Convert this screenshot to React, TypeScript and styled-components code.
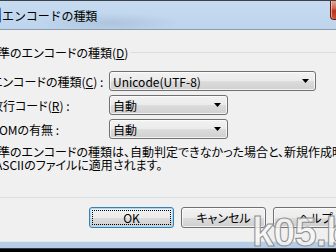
import React from "react";
import styled, { createGlobalStyle } from "styled-components";

const GlobalStyle = createGlobalStyle`
  html, body { margin: 0; padding: 0; }
  body { width: 336px; height: 252px; overflow: hidden; background: #000; }
  #root { width: 336px; height: 252px; overflow: hidden; position: relative; }
`;

const UI_FONT = `"Noto Sans CJK JP", "Noto Sans", sans-serif`;

const Window = styled.div`
  box-sizing: border-box;
  width: 440px;
  height: 249px;
  margin-left: -40px;
  display: flex;
  flex-direction: column;
  background: linear-gradient(to bottom, #c2d7ee 0%, #c8dbf0 55%, #b6cce6 100%);
  border-top: 1px solid #3e4247;
  border-bottom: 1px solid #2b3a4c;
  font-family: ${UI_FONT};
  font-size: 12px;
  color: #000;
`;

const TitleBar = styled.div`
  height: 28px;
  display: flex;
  align-items: center;
  padding: 0 27px 0 25px;
  background:
    radial-gradient(ellipse 70px 10px at 150px 22px, rgba(150, 175, 200, 0.45), rgba(150, 175, 200, 0) 100%),
    linear-gradient(to bottom, #c6dbf1 0%, #c1d7ee 60%, #bed4ec 100%);
`;

const TitleIcon = styled.div`
  width: 16px;
  height: 16px;
  margin-right: 1px;
  border-radius: 2px;
  background: linear-gradient(135deg, #6aa8e6, #1f5fb5);
`;

const TitleText = styled.span`
  font-size: 12px;
  letter-spacing: -0.1px;
  color: #000;
  white-space: nowrap;
`;

const CloseButton = styled.div`
  align-self: flex-start;
  margin-left: auto;
  width: 43px;
  height: 19px;
  box-sizing: border-box;
  border: 1px solid #5a1d14;
  border-top: none;
  border-radius: 0 0 4px 4px;
  background: linear-gradient(to bottom, #e6a493 0%, #cf6a56 40%, #b8321e 55%, #c9543c 100%);
  box-shadow: inset 1px 0 0 rgba(255, 220, 210, 0.6);
`;

const Client = styled.div`
  box-sizing: border-box;
  height: 213px;
  margin: 0 8px;
  padding: 16px 11px 0 7px;
  background: #f0f0f0;
  border: 1px solid #8c9bad;
  border-bottom-color: #dfe7f0;
  display: flex;
  flex-direction: column;
`;

const GroupBox = styled.fieldset`
  margin: 0;
  padding: 12px 9px 26px 9px;
  border: 1px solid #d5dfe5;
  border-radius: 3px;
  min-width: 0;
`;

const GroupLegend = styled.legend`
  padding: 0 2px;
  margin-left: -2px;
  line-height: 13px;
  font-feature-settings: "palt";
  white-space: nowrap;
`;

const FieldGrid = styled.div`
  margin-left: 5px;
  display: grid;
  grid-template-columns: 118px auto;
  row-gap: 4px;
  align-items: center;
`;

const FieldLabel = styled.span`
  line-height: 13px;
  font-feature-settings: "palt";
  white-space: nowrap;
`;

const Combo = styled.div<{ $w: number }>`
  box-sizing: border-box;
  width: ${(p) => p.$w}px;
  height: 20px;
  display: flex;
  align-items: center;
  justify-content: space-between;
  padding: 0 6px 0 3px;
  border: 1px solid #707070;
  border-radius: 3px;
  background: linear-gradient(to bottom, #f2f2f2 0%, #ebebeb 50%, #dddddd 50%, #cfcfcf 100%);
  box-shadow: inset 0 0 0 1px rgba(255, 255, 255, 0.7);
  white-space: nowrap;
  line-height: 13px;
`;

const Description = styled.p`
  margin: 7px 0 0 0;
  line-height: 12px;
  font-feature-settings: "palt";
  white-space: nowrap;
`;

const LeadChar = styled.span`
  display: inline-block;
  width: 9px;
  overflow: hidden;
`;

const ButtonRow = styled.div`
  margin-top: 9px;
  display: flex;
  justify-content: flex-end;
  gap: 7px;
  padding-right: 22px;
`;

const Button = styled.div<{ $default?: boolean }>`
  position: relative;
  box-sizing: border-box;
  width: 85px;
  height: 21px;
  display: flex;
  align-items: center;
  justify-content: center;
  border: 1px solid ${(p) => (p.$default ? "#3c7fb1" : "#707070")};
  border-radius: 3px;
  background: linear-gradient(to bottom, #f2f2f2 0%, #ebebeb 50%, #dddddd 50%, #cfcfcf 100%);
  box-shadow: inset 0 0 0 1px ${(p) => (p.$default ? "#a6dcf6" : "rgba(255,255,255,0.7)")};
  line-height: 13px;
  font-feature-settings: "palt";
  white-space: nowrap;

  ${(p) =>
    p.$default
      ? `&::after {
    content: "";
    position: absolute;
    inset: 2px;
    border: 1px dotted #000;
  }`
      : ""}
`;

const Watermark = styled.div`
  position: absolute;
  left: 252px;
  top: 212px;
  font-family: "Liberation Sans", Arial, sans-serif;
  font-weight: bold;
  font-size: 40px;
  line-height: 40px;
  letter-spacing: -1px;
  color: rgba(248, 248, 248, 0.75);
  -webkit-text-stroke: 1px #8e8e8e;
  white-space: nowrap;
  pointer-events: none;
`;

const Arrow = () => (
  <svg width="7" height="4" viewBox="0 0 7 4">
    <polygon points="0,0 7,0 3.5,4" fill="#000" />
  </svg>
);

export default function App() {
  return (
    <>
      <GlobalStyle />
      <Window>
        <TitleBar>
          <TitleIcon />
          <TitleText>エンコードの種類</TitleText>
          <CloseButton />
        </TitleBar>
        <Client>
          <GroupBox>
            <GroupLegend>
              標準のエンコードの種類(<u>D</u>)
            </GroupLegend>
            <FieldGrid>
              <FieldLabel>
                エンコードの種類(<u>C</u>) :
              </FieldLabel>
              <Combo $w={207}>
                <span>Unicode(UTF-8)</span>
                <Arrow />
              </Combo>
              <FieldLabel>
                改行コード(<u>R</u>) :
              </FieldLabel>
              <Combo $w={119}>
                <span>自動</span>
                <Arrow />
              </Combo>
              <FieldLabel>BOMの有無 :</FieldLabel>
              <Combo $w={119}>
                <span>自動</span>
                <Arrow />
              </Combo>
            </FieldGrid>
            <Description>
              標準のエンコードの種類は、自動判定できなかった場合と、新規作成時
              <br />
              <LeadChar>や</LeadChar>ASCIIのファイルに適用されます。
            </Description>
          </GroupBox>
          <ButtonRow>
            <Button $default>OK</Button>
            <Button>キャンセル</Button>
            <Button>ヘルプ</Button>
          </ButtonRow>
        </Client>
      </Window>
      <Watermark>k05.biz</Watermark>
    </>
  );
}
